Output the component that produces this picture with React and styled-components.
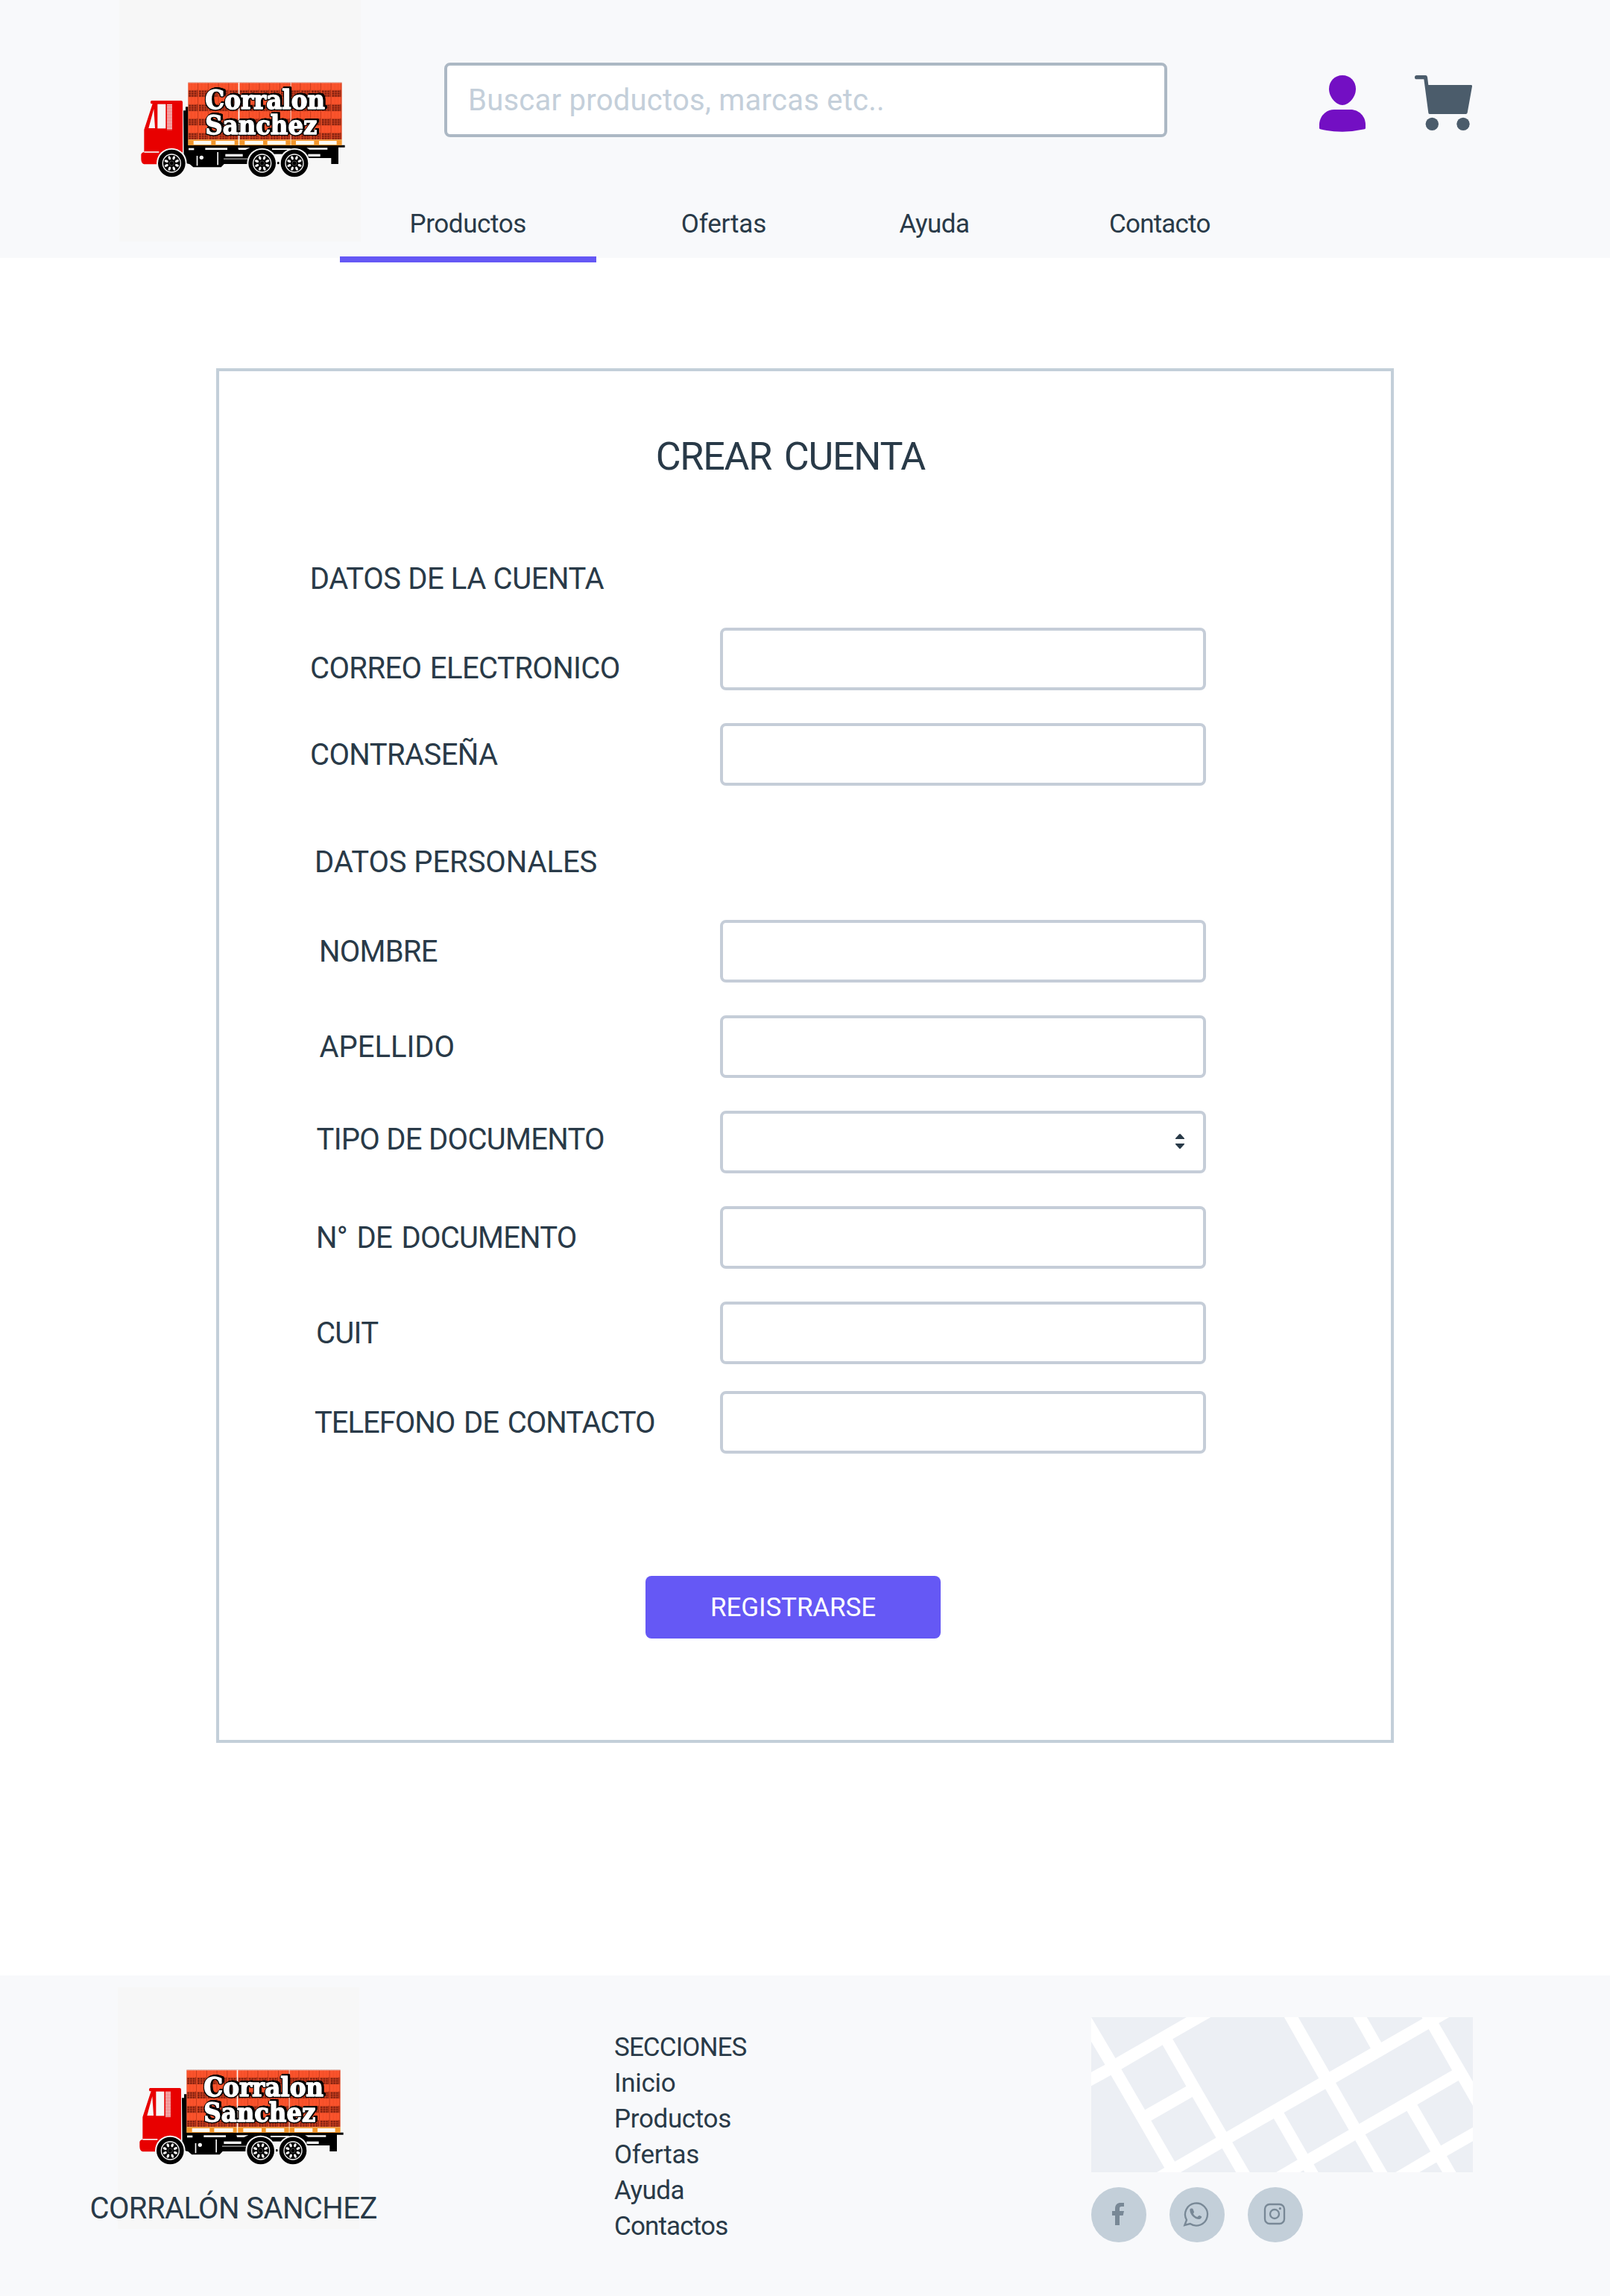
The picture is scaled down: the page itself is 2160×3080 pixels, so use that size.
import React from "react";
import styled, { createGlobalStyle } from "styled-components";

const color = {
  ink: "#293a48",
  bar: "#f8f9fb",
  line: "#c3cfd9",
  field: "#c5cdd8",
  accent: "#6558f5",
  muted: "#788896",
};
const font = `Roboto, "Liberation Sans", sans-serif`;

const Global = createGlobalStyle`
  *, *::before, *::after { box-sizing: border-box; }
  body { margin: 0; background: #fff; color: ${color.ink}; font-family: ${font}; }
  h1, h2, p, ul { margin: 0; padding: 0; font-weight: 400; }
  ul { list-style: none; }
`;

const Page = styled.div`
  width: 2160px;
  min-height: 3080px;
  display: flex;
  flex-direction: column;
`;

/* ---------- header ---------- */

const Header = styled.header`
  height: 346px;
  background: ${color.bar};
  display: grid;
  grid-template-columns: 160px 324px 1fr;
  grid-template-rows: 270px 76px;
`;

const LogoArt = styled.svg`
  display: block;
  width: 324px;
  height: 324px;
  background: #f7f7f7;
`;

const Lettering = styled.text`
  font-family: "DejaVu Serif Condensed", "DejaVu Serif", serif;
  font-size: 104px;
  font-weight: 700;
  fill: #fff;
  stroke: #fff;
  stroke-width: 4px;
  stroke-linejoin: round;
  filter: drop-shadow(3px 0 0 #000) drop-shadow(-3px 0 0 #000) drop-shadow(0 3px 0 #000)
    drop-shadow(6px -6px 0 #000);
`;

const HeaderLogo = styled.a`
  grid-column: 2;
  grid-row: 1 / 3;
`;

const Tools = styled.div`
  grid-column: 3;
  grid-row: 1;
  display: flex;
  align-items: flex-start;
  padding: 84px 0 0 112px;
`;

const Search = styled.input`
  width: 970px;
  height: 100px;
  margin-right: 204px;
  padding: 1px 28px 0;
  border: 4px solid #acb8c4;
  border-radius: 8px;
  background: #fff;
  font: 400 40px ${font};
  letter-spacing: 0.25px;
  color: ${color.ink};
  &::placeholder {
    color: #c4cfda;
    opacity: 1;
  }
`;

const UserIcon = styled.svg`
  width: 62px;
  height: 76px;
  margin: 17px 66px 0 0;
`;

const CartIcon = styled.svg`
  width: 77px;
  height: 74px;
  margin-top: 17px;
`;

const Nav = styled.nav`
  grid-column: 1 / -1;
  grid-row: 2;
  display: flex;
  padding-left: 456px;
`;

const Tab = styled.a`
  width: ${(p) => p.$width}px;
  height: 82px;
  padding: 7px 0 0 ${(p) => p.$pad}px;
  border-bottom: 8px solid ${(p) => (p.$active ? color.accent : "transparent")};
  font-size: 35px;
  line-height: 48px;
  letter-spacing: ${(p) => p.$spacing}px;
  white-space: nowrap;
`;

/* ---------- form ---------- */

const Card = styled.form`
  width: 1580px;
  height: 1844px;
  margin: 148px 0 312px 290px;
  padding: 85px 0 0 120px;
  border: 4px solid ${color.line};
`;

const Title = styled.h1`
  padding-left: 465.7px;
  font-size: 52px;
  line-height: 60px;
  letter-spacing: -1.2px;
  word-spacing: 5px;
`;

const SectionTitle = styled.h2`
  margin: ${(p) => p.$above}px 0 ${(p) => p.$below}px;
  padding-left: ${(p) => p.$indent}px;
  font-size: 40px;
  line-height: 48px;
  letter-spacing: ${(p) => p.$spacing}px;
`;

const Fields = styled.div`
  display: grid;
  gap: 44px;
`;

const Field = styled.label`
  display: grid;
  grid-template-columns: 552px 652px;
  align-items: center;
  height: 84px;
  margin-top: ${(p) => p.$lift || 0}px;
`;

const Caption = styled.span`
  margin-top: 2px;
  padding: ${(p) => Math.max(p.$drop, 0) * 2}px 0 ${(p) => Math.max(-p.$drop, 0) * 2}px
    ${(p) => p.$indent}px;
  font-size: 40px;
  line-height: 48px;
  letter-spacing: ${(p) => p.$spacing}px;
  word-spacing: ${(p) => p.$word || 0}px;
  white-space: nowrap;
`;

const Input = styled.input`
  width: 100%;
  height: 84px;
  padding: 0 24px;
  border: 4px solid ${color.field};
  border-radius: 8px;
  background: #fff;
  font: 400 36px ${font};
  color: ${color.ink};
`;

const Select = styled.div`
  height: 84px;
  padding-right: 25px;
  border: 4px solid ${color.field};
  border-radius: 8px;
  background: #fff;
  display: flex;
  align-items: center;
  justify-content: flex-end;
`;

const SortIcon = styled.svg`
  width: 12px;
  height: 22px;
  margin-top: -2px;
`;

const Submit = styled.button`
  display: block;
  width: 396px;
  height: 84px;
  margin: 164px 0 0 452px;
  padding: 1px 0 0 87px;
  border: 0;
  border-radius: 8px;
  background: ${color.accent};
  color: #fff;
  font: 400 35px/48px ${font};
  letter-spacing: -0.1px;
  text-align: left;
`;

/* ---------- footer ---------- */

const Footer = styled.footer`
  height: 430px;
  background: ${color.bar};
  display: grid;
  grid-template-columns: 824px 640px 512px;
`;

const Brand = styled.div`
  padding: 16px 0 0 120.5px;
`;

const BrandLogo = styled.div`
  padding-left: 37.5px;
`;

const BrandName = styled.p`
  position: relative;
  margin-top: -51px;
  font-size: 40px;
  line-height: 48px;
  letter-spacing: -0.6px;
`;

const Links = styled.ul`
  padding-top: 73px;
  font-size: 35px;
  line-height: 48px;
`;

const LinkItem = styled.li`
  letter-spacing: ${(p) => p.$spacing}px;
`;

const Contact = styled.div`
  padding-top: 56px;
`;

const MapArt = styled.svg`
  display: block;
  width: 512px;
  height: 208px;
  background: #fff;
`;

const Socials = styled.div`
  display: flex;
  gap: 31px;
  margin-top: 20px;
`;

const Social = styled.a`
  width: 74px;
  height: 74px;
  border-radius: 50%;
  background: ${color.line};
  svg {
    display: block;
    width: 74px;
    height: 74px;
  }
`;

/* ---------- drawings ---------- */

const spokes = [0, 45, 90, 135, 180, 225, 270, 315];

const Wheel = ({ x }) => (
  <g transform={`translate(${x} 387)`}>
    <circle r="61" fill="#f7f7f7" />
    <circle r="55" fill="#000" />
    <circle r="36" fill="none" stroke="#f7f7f7" strokeWidth="4" />
    {spokes.map((a) => (
      <ellipse key={a} cy="-23" rx="5" ry="8" fill="#f7f7f7" transform={`rotate(${a + 22})`} />
    ))}
    <circle r="9" fill="none" stroke="#888" strokeWidth="1.5" />
  </g>
);

const Logo = ({ id }) => (
  <LogoArt viewBox="0 0 324 324" role="img" aria-label="Corralon Sanchez">
    <defs>
      <pattern id={`${id}-brick`} x="247" y="63" width="41.2" height="57.3" patternUnits="userSpaceOnUse">
        <rect width="41.2" height="57.3" fill="#fa532c" />
        <path d="M14 0V28M27 0V28" stroke="#e5441f" strokeWidth="1.5" />
        <path d="M40 0V28" stroke="#a82a10" strokeWidth="2" />
        <rect y="28.6" width="41.2" height="28.7" fill="#e04822" />
        <g fill="#6a160b">
          <rect x="3" y="32" width="8" height="6" />
          <rect x="14" y="32" width="8" height="6" />
          <rect x="25" y="32" width="8" height="6" />
          <rect x="3" y="41" width="8" height="6" />
          <rect x="14" y="41" width="8" height="6" />
          <rect x="25" y="41" width="8" height="6" />
          <rect x="3" y="50" width="8" height="6" />
          <rect x="14" y="50" width="8" height="6" />
          <rect x="25" y="50" width="8" height="6" />
          <rect x="36" y="29" width="2.5" height="28" />
        </g>
      </pattern>
    </defs>
    <g transform="translate(10 90) scale(.33333)">
      {/* exhaust, chassis and tank */}
      <path d="M228 175H237V160H248V314H878V323H852V390H823V366H735L720 356H500V390H392L380 403H268L254 391L230 385Z" fill="#000" />
      <g fill="#f7f7f7">
        <rect x="249" y="326" width="22" height="8" />
        <rect x="316" y="325" width="89" height="8" />
        <path d="M448 325H496L478 333H450Z" />
        <rect x="585" y="327" width="74" height="6" />
        <path d="M724 325H808V332H736Z" />
        <rect x="397" y="350" width="70" height="10" />
        <rect x="730" y="350" width="49" height="10" />
        <rect x="281" y="357" width="5" height="40" />
        <rect x="364" y="342" width="5" height="52" />
        <circle cx="301" cy="364" r="8" />
        <rect x="390" y="368" width="98" height="2.5" />
        <rect x="592" y="350" width="36" height="44" />
      </g>
      <circle cx="610" cy="386" r="5" fill="#000" />
      {/* cab */}
      <path d="M99 135H219Q225 135 225 141V345L170 360L122 391H70Q58 388 58 370V352Q59 344 70 342V252L104 148H98Q93 140 99 135Z" fill="#e80000" />
      <path d="M70 342H130" stroke="#f7f7f7" strokeWidth="5" />
      <path d="M109 168L114 246H88Z" fill="#f7f7f7" />
      <rect x="124" y="149" width="33" height="98" fill="#f7f7f7" />
      <path d="M172.500 150V253" stroke="#f7f7f7" strokeWidth="21" strokeDasharray="4 2" />
      {/* cargo */}
      <rect x="247" y="62" width="619" height="230" fill={`url(#${id}-brick)`} />
      <path d="M247 63H866" stroke="#e9c9c0" strokeWidth="2" />
      <rect x="247" y="292" width="619" height="23" fill="#f2962c" />
      <g fill="#fdfaf5">
        <rect x="269" y="297" width="71" height="15" />
        <rect x="358" y="297" width="76" height="15" />
        <rect x="475" y="297" width="74" height="15" />
        <rect x="566" y="297" width="74" height="15" />
        <rect x="681" y="297" width="73" height="15" />
        <rect x="774" y="297" width="71" height="15" />
        <rect x="449" y="62" width="5" height="253" />
        <rect x="659" y="62" width="2.5" height="253" />
      </g>
      <Wheel x={181} />
      <Wheel x={545} />
      <Wheel x={675} />
      <Lettering>
        <tspan x="316" y="169" textLength="482" lengthAdjust="spacingAndGlyphs">Corralon</tspan>
        <tspan x="316" y="271" textLength="450" lengthAdjust="spacingAndGlyphs">Sanchez</tspan>
      </Lettering>
    </g>
  </LogoArt>
);

const blocks = [
  "67,78 425,78 158,243",
  "67,176 119,269 67,299",
  "67,355 141,311 342,684 314,702 67,702",
  "180,287 335,190 424,356 269,451",
  "292,494 447,399 536,563 381,659",
  "403,702 559,606 611,702",
  "516,78 792,78 922,324 575,539 373,166",
  "845,78 1051,78 1117,203 962,298",
  "1103,78 1309,78 1312,84 1157,179",
  "1412,78 1501,78 1501,337 1373,102",
  "986,342 1335,126 1423,292 1074,507",
  "791,462 947,367 1035,532 880,628",
  "597,581 753,486 842,652 762,702 663,702",
  "852,702 865,694 869,702",
  "903,670 1059,574 1128,702 920,702",
  "1097,550 1253,455 1342,619 1211,702 1180,702",
  "1292,430 1447,333 1501,434 1501,521 1381,595",
  "1403,637 1501,577 1501,702 1438,702",
  "1300,702 1364,662 1386,702",
];

const StreetMap = () => (
  <MapArt viewBox="67 78 1434 624" preserveAspectRatio="none">
    {blocks.map((points) => (
      <polygon key={points} points={points} fill="#eceff4" />
    ))}
  </MapArt>
);

const FacebookIcon = () => (
  <svg viewBox="12 42 222 222" fill={color.muted}>
    <path d="M108 195V156H96V138H108V129C108 113 117 105 131 105H144V120H133C128 120 126 123 126 128V138H144L140 156H126V195Z" />
  </svg>
);

const WhatsappIcon = () => (
  <svg viewBox="327 42 222 222">
    <path
      d="M388 195L396 174A45 45 0 1 1 410 189Z"
      fill="none"
      stroke={color.muted}
      strokeWidth="7"
    />
    <path
      d="M409 132C411 127 420 126 422 131L426 142C426 145 423 147 423 149C426 155 433 160 439 162C442 160 444 156 448 156L456 160C458 165 453 170 447 171C428 172 408 152 409 132Z"
      fill={color.muted}
    />
  </svg>
);

const InstagramIcon = () => (
  <svg viewBox="642 42 222 222" fill="none" stroke={color.muted} strokeWidth="7">
    <rect x="711" y="111" width="78" height="78" rx="19" />
    <circle cx="750" cy="150" r="18" />
    <circle cx="772" cy="128" r="5" fill={color.muted} stroke="none" />
  </svg>
);

/* ---------- data ---------- */

const tabs = [
  { text: "Productos", width: 344, pad: 93.5, spacing: -0.4, active: true },
  { text: "Ofertas", width: 342, pad: 113.8, spacing: -0.2 },
  { text: "Ayuda", width: 223, pad: 64.5, spacing: -0.5 },
  { text: "Contacto", width: 382, pad: 123, spacing: -0.8 },
];

const accountFields = [
  { text: "CORREO ELECTRONICO", indent: 2, spacing: -0.6, word: 2, drop: 12, type: "email" },
  { text: "CONTRASEÑA", indent: 2, spacing: -0.6, type: "password" },
];

const personalFields = [
  { text: "NOMBRE", indent: 14, spacing: -0.77 },
  { text: "APELLIDO", indent: 14.5, spacing: -0.04 },
  { text: "TIPO DE DOCUMENTO", indent: 10.5, spacing: -0.72, drop: -4, type: "select" },
  { text: "N° DE DOCUMENTO", indent: 10, spacing: -0.8, word: 3.5 },
  { text: "CUIT", indent: 10, spacing: -0.7 },
  { text: "TELEFONO DE CONTACTO", indent: 8, spacing: -1.05, word: 3, lift: -8, type: "tel" },
];

const links = [
  ["SECCIONES", -0.9],
  ["Inicio", -0.3],
  ["Productos", -0.35],
  ["Ofertas", -0.22],
  ["Ayuda", -0.5],
  ["Contactos", -0.85],
];

const FormField = ({ text, indent, spacing, word, drop = 0, lift, type = "text" }) => (
  <Field $lift={lift}>
    <Caption $indent={indent} $spacing={spacing} $word={word} $drop={drop}>
      {text}
    </Caption>
    {type === "select" ? (
      <Select role="combobox">
        <SortIcon viewBox="0 0 12 22" fill={color.ink}>
          <path d="M0 8V7L5 1.500Q6 .5 7 1.500L12 7V8Z" />
          <path d="M0 14V15L5 20.500Q6 21.500 7 20.500L12 15V14Z" />
        </SortIcon>
      </Select>
    ) : (
      <Input type={type} />
    )}
  </Field>
);

export default function App() {
  return (
    <Page>
      <Global />
      <Header>
        <HeaderLogo>
          <Logo id="top" />
        </HeaderLogo>
        <Tools>
          <Search placeholder="Buscar productos, marcas etc.." />
          <UserIcon viewBox="90 63 186 228" fill="#730fc3">
            <path d="M183 63C214 63 237 87 237 118C237 150 210 183 183 183C156 183 129 150 129 118C129 87 152 63 183 63Z" />
            <path d="M90 276V262C90 228 117 201 150 201H216C249 201 276 228 276 262V276Q276 279 272 280Q183 300 94 280Q90 279 90 276Z" />
          </UserIcon>
          <CartIcon viewBox="473 63 231 222" fill="#4b5c6b">
            <path d="M481 63H516Q523 63 524 70L528 102H700Q705 102 704 108L685 214Q684 219 679 219H533Q528 219 528 214L510 79H481A8 8 0 0 1 481 63Z" />
            <circle cx="543" cy="259" r="26" />
            <circle cx="668" cy="259" r="26" />
          </CartIcon>
        </Tools>
        <Nav>
          {tabs.map((t) => (
            <Tab key={t.text} $width={t.width} $pad={t.pad} $spacing={t.spacing} $active={t.active}>
              {t.text}
            </Tab>
          ))}
        </Nav>
      </Header>

      <Card>
        <Title>CREAR CUENTA</Title>
        <SectionTitle $above={110} $below={41} $indent={1.8} $spacing={-0.42}>
          DATOS DE LA CUENTA
        </SectionTitle>
        <Fields>
          {accountFields.map((f) => (
            <FormField key={f.text} {...f} />
          ))}
        </Fields>
        <SectionTitle $above={79} $below={53} $indent={8} $spacing={-0.1}>
          DATOS PERSONALES
        </SectionTitle>
        <Fields>
          {personalFields.map((f) => (
            <FormField key={f.text} {...f} />
          ))}
        </Fields>
        <Submit type="button">REGISTRARSE</Submit>
      </Card>

      <Footer>
        <Brand>
          <BrandLogo>
            <Logo id="bottom" />
          </BrandLogo>
          <BrandName>CORRALÓN SANCHEZ</BrandName>
        </Brand>
        <Links>
          {links.map(([text, spacing]) => (
            <LinkItem key={text} $spacing={spacing}>
              {text}
            </LinkItem>
          ))}
        </Links>
        <Contact>
          <StreetMap />
          <Socials>
            <Social>
              <FacebookIcon />
            </Social>
            <Social>
              <WhatsappIcon />
            </Social>
            <Social>
              <InstagramIcon />
            </Social>
          </Socials>
        </Contact>
      </Footer>
    </Page>
  );
}
